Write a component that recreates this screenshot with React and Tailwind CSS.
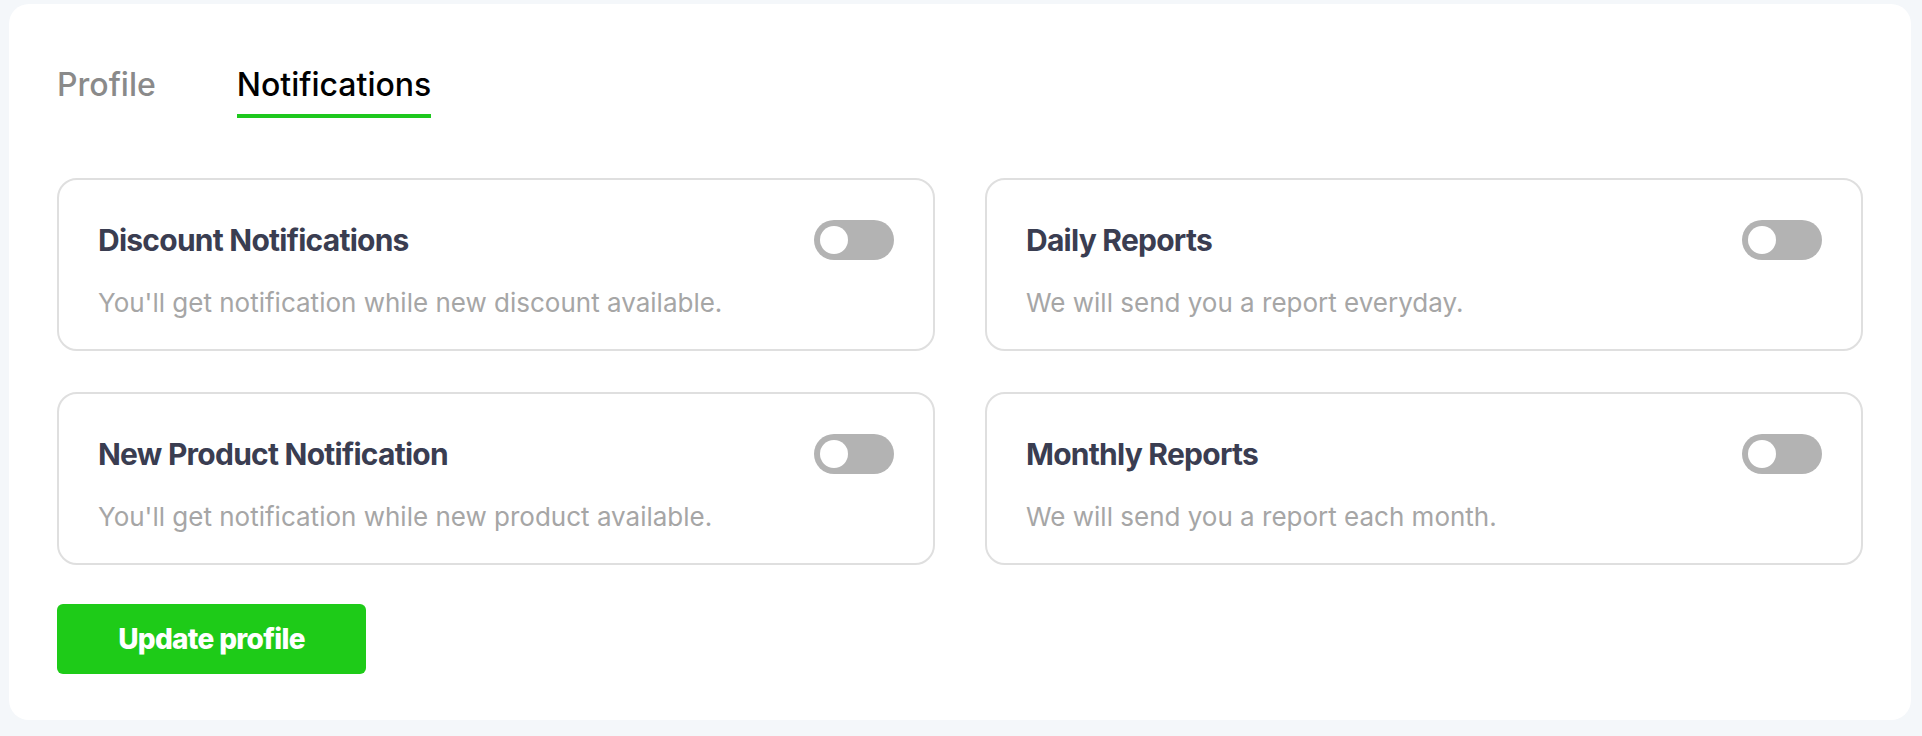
import React, { useState } from 'react'

const settings = [
  {
    id: 'discount',
    title: 'Discount Notifications',
    description: "You'll get notification while new discount available."
  },
  {
    id: 'daily',
    title: 'Daily Reports',
    description: 'We will send you a report everyday.'
  },
  {
    id: 'product',
    title: 'New Product Notification',
    description: "You'll get notification while new product available."
  },
  {
    id: 'monthly',
    title: 'Monthly Reports',
    description: 'We will send you a report each month.'
  }
]

const Toggle = ({ on, onChange }) => (
  <button
    onClick={onChange}
    className={`relative w-[80px] h-[40px] rounded-full shrink-0 transition-colors ${
      on ? 'bg-[#1ecb18]' : 'bg-[#b3b3b3]'
    }`}
  >
    <span
      className={`absolute top-[6px] w-[28px] h-[28px] rounded-full bg-white transition-all ${
        on ? 'left-[46px]' : 'left-[6px]'
      }`}
    />
  </button>
)

export default function App() {
  const [activeTab, setActiveTab] = useState('notifications')
  const [values, setValues] = useState({})

  return (
    <div className="min-h-screen bg-[#f4f7fa] pt-[4px] pl-[9px] pr-[11px] pb-[14px] font-['Inter',sans-serif]">
      <div className="bg-white rounded-[20px] px-12 pt-[62px] pb-[46px]">
        {/* Tabs */}
        <div className="flex items-end gap-[81px]">
          <button
            onClick={() => setActiveTab('profile')}
            className={`text-[32px] leading-[37px] font-medium pb-[11px] border-b-4 ${
              activeTab === 'profile' ? 'text-black border-[#1ec81e]' : 'text-[#8a8a8a] border-transparent'
            }`}
          >
            Profile
          </button>
          <button
            onClick={() => setActiveTab('notifications')}
            className={`text-[32px] leading-[37px] font-medium pb-[11px] border-b-4 ${
              activeTab === 'notifications' ? 'text-black border-[#1ec81e]' : 'text-[#8a8a8a] border-transparent'
            }`}
          >
            Notifications
          </button>
        </div>

        {/* Cards */}
        <div className="grid grid-cols-2 gap-x-[50px] gap-y-[41px] mt-[60px]">
          {settings.map((item) => (
            <div
              key={item.id}
              className="border-2 border-[#dfdfdf] rounded-[20px] px-[39px] pt-[40px] pb-[31px]"
            >
              <div className="flex items-center justify-between h-[40px]">
                <h3 className="text-[30px] leading-[40px] font-bold tracking-[-0.025em] text-[#3a3d51]">
                  {item.title}
                </h3>
                <Toggle
                  on={!!values[item.id]}
                  onChange={() => setValues({ ...values, [item.id]: !values[item.id] })}
                />
              </div>
              <p className="mt-[28px] text-[26px] leading-[30px] text-[#a6a6a6]">
                {item.description}
              </p>
            </div>
          ))}
        </div>

        {/* Submit */}
        <button className="mt-[39px] w-[309px] h-[70px] rounded-[6px] bg-[#1ecb18] text-white text-[28px] font-extrabold tracking-tight">
          Update profile
        </button>
      </div>
    </div>
  )
}
